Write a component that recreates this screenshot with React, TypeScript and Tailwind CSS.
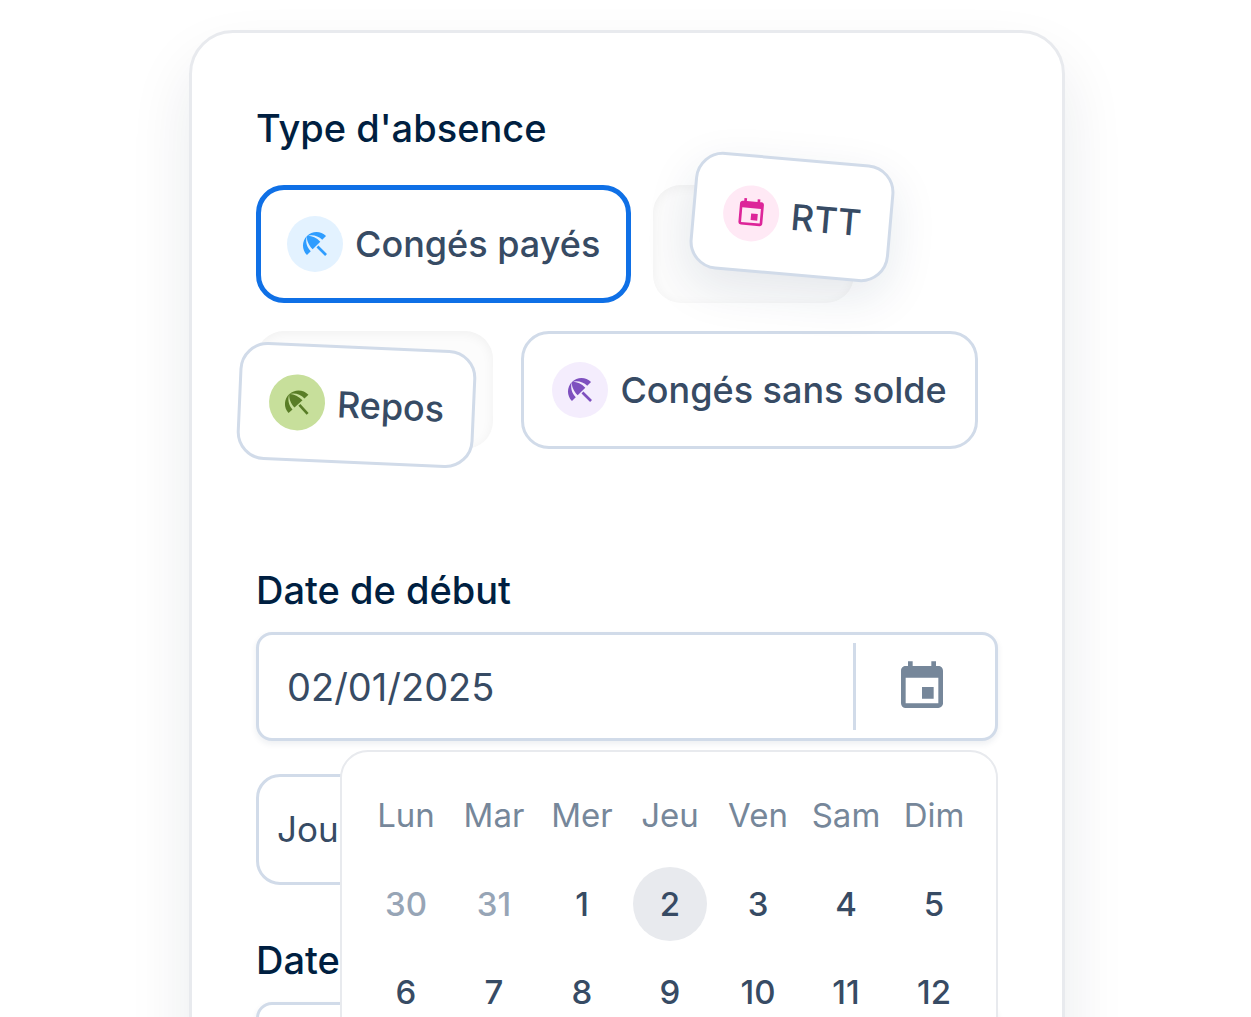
import React, { useState } from 'react';
import { MdBeachAccess, MdEvent } from 'react-icons/md';

interface AbsenceType {
  id: string;
  label: string;
  icon: 'umbrella' | 'calendar';
  badge: string;
  lifted?: string;
}

const absenceRows: { gap: string; types: AbsenceType[] }[] = [
  {
    gap: 'gap-[22px]',
    types: [
      { id: 'conges-payes', label: 'Congés payés', icon: 'umbrella', badge: 'bg-[#e3f2ff] text-[#2f9dff]' },
      {
        id: 'rtt',
        label: 'RTT',
        icon: 'calendar',
        badge: 'bg-[#ffe9f5] text-[#dd2599]',
        lifted: 'translate-x-[39px] -translate-y-[27px] rotate-5 shadow-[0_16px_48px_rgba(20,50,90,0.1)]',
      },
    ],
  },
  {
    gap: 'gap-7',
    types: [
      {
        id: 'repos',
        label: 'Repos',
        icon: 'umbrella',
        badge: 'bg-[#c7df9b] text-[#597d27]',
        lifted: '-translate-x-[18px] translate-y-[15px] rotate-[2.5deg]',
      },
      { id: 'sans-solde', label: 'Congés sans solde', icon: 'umbrella', badge: 'bg-[#f4edfd] text-[#7e50bf]' },
    ],
  },
];

const weekDays = ['Lun', 'Mar', 'Mer', 'Jeu', 'Ven', 'Sam', 'Dim'];

// First weeks of January 2025, starting on the last Monday of December
const weeks = [
  [30, 31, 1, 2, 3, 4, 5],
  [6, 7, 8, 9, 10, 11, 12],
  [13, 14, 15, 16, 17, 18, 19],
];

interface AbsenceChipProps {
  type: AbsenceType;
  selected: boolean;
  onSelect: () => void;
}

function AbsenceChip({ type, selected, onSelect }: AbsenceChipProps) {
  const Icon = type.icon === 'umbrella' ? MdBeachAccess : MdEvent;

  const chip = (
    <label
      className={`flex cursor-pointer items-center gap-3 rounded-[28px] bg-white ${
        selected ? 'border-5 border-[#0f70e6] p-[26px]' : 'border-3 border-[#d1dbe9] p-7'
      } ${type.lifted ?? ''}`}
    >
      <input type="radio" name="absence" className="sr-only" checked={selected} onChange={onSelect} />
      <span className={`flex size-14 items-center justify-center rounded-full ${type.badge}`}>
        <Icon className="size-8" />
      </span>
      <span className="text-4xl leading-[56px] font-medium whitespace-nowrap text-[#374b64]">{type.label}</span>
    </label>
  );

  if (!type.lifted) {
    return chip;
  }

  return <div className="rounded-[28px] bg-[#fcfcfc] shadow-[inset_0_2px_12px_rgba(0,0,0,0.05)]">{chip}</div>;
}

function DatePopover() {
  const [day, setDay] = useState(2);

  return (
    <div className="absolute top-full right-0 z-10 mt-[9px] rounded-[28px] border-2 border-[#e8eaee] bg-white pt-5 pr-[18px] pb-6 pl-5">
      <table className="table-fixed border-collapse">
        <thead>
          <tr>
            {weekDays.map((name) => (
              <th key={name} scope="col" className="h-[88px] w-[88px] p-0 text-[33px] font-normal text-[#76879a]">
                {name}
              </th>
            ))}
          </tr>
        </thead>
        <tbody>
          {weeks.map((week) => (
            <tr key={week[0]}>
              {week.map((date) => (
                <td key={date} className="h-[88px] p-0 text-center">
                  <button
                    type="button"
                    onClick={() => setDay(date)}
                    className={`size-[74px] rounded-full pt-0.5 text-[33px] font-medium ${
                      date === day ? 'bg-[#e8eaee]' : ''
                    } ${date > 19 ? 'text-[#97a5b6]' : 'text-[#374b64]'}`}
                  >
                    {date}
                  </button>
                </td>
              ))}
            </tr>
          ))}
        </tbody>
      </table>
    </div>
  );
}

interface DateFieldProps {
  id: string;
  label: string;
  defaultValue: string;
  children?: React.ReactNode;
}

function DateField({ id, label, defaultValue, children }: DateFieldProps) {
  return (
    <div>
      <label htmlFor={id} className="block text-[38px] leading-[48px] font-medium text-[#001f41]">
        {label}
      </label>
      <div className="relative mt-[18px]">
        <div className="flex h-[109px] rounded-2xl border-3 border-[#d1dbe9] bg-white py-2 shadow-[0_3px_6px_rgba(20,50,90,0.08)]">
          <input
            id={id}
            type="text"
            defaultValue={defaultValue}
            className="min-w-0 flex-1 bg-transparent pt-0.5 pl-7 text-[38px] text-[#374b64] outline-none"
          />
          <button
            type="button"
            aria-label="Ouvrir le calendrier"
            className="flex w-[142px] items-center justify-center border-l-3 border-[#d1dbe9] pr-2 text-[#76879a]"
          >
            <MdEvent className="size-14" />
          </button>
        </div>
        {children}
      </div>
    </div>
  );
}

export default function App() {
  const [selected, setSelected] = useState('conges-payes');

  return (
    <div className="h-screen overflow-hidden bg-white pt-[30px] pr-[186px] pl-[189px] font-['Inter',sans-serif]">
      <form className="rounded-[44px] border-3 border-[#e8eaee] bg-white px-16 pt-[71px] pb-16 shadow-[0_32px_64px_rgba(15,35,60,0.09)]">
        <fieldset>
          <legend className="text-[38px] leading-[48px] font-medium text-[#001f41]">Type d'absence</legend>
          <div className="mt-[33px] flex flex-col gap-7">
            {absenceRows.map((row, index) => (
              <div key={index} className={`flex ${row.gap}`}>
                {row.types.map((type) => (
                  <AbsenceChip
                    key={type.id}
                    type={type}
                    selected={selected === type.id}
                    onSelect={() => setSelected(type.id)}
                  />
                ))}
              </div>
            ))}
          </div>
        </fieldset>

        <div className="mt-[117px]">
          <DateField id="start" label="Date de début" defaultValue="02/01/2025">
            <DatePopover />
          </DateField>
        </div>

        <select
          aria-label="Durée"
          className="mt-[33px] block h-[111px] w-full appearance-none rounded-3xl border-3 border-[#d1dbe9] bg-white px-[18px] text-[35px] text-[#374b64]"
        >
          <option>Jou</option>
          <option>Matin</option>
          <option>Après-midi</option>
        </select>

        <div className="mt-[51px]">
          <DateField id="end" label="Date de fin" defaultValue="10/01/2025" />
        </div>
      </form>
    </div>
  );
}
